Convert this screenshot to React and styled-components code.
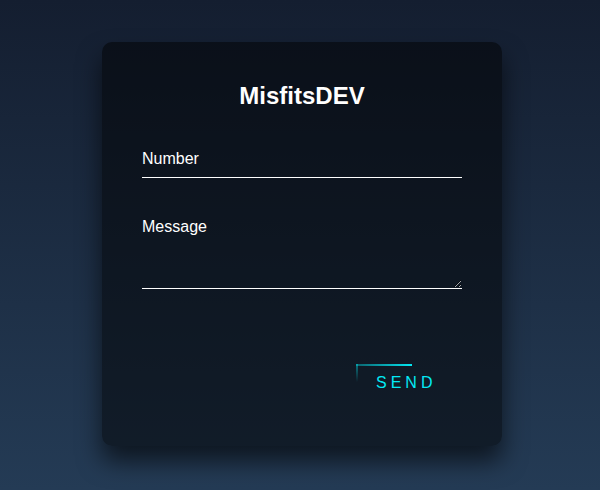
import React from 'react'
import styled, { createGlobalStyle } from 'styled-components'

const GlobalStyle = createGlobalStyle`
  html, body {
    margin: 0;
    padding: 0;
    height: 100%;
  }
  body {
    font-family: "Liberation Sans", Arial, sans-serif;
    background: linear-gradient(#141e30, #243b55);
  }
  #root {
    height: 100%;
  }
`

const Page = styled.div`
  height: 490px;
  box-sizing: border-box;
  padding: 0 0 2px 4px;
  display: flex;
  align-items: center;
  justify-content: center;
`

const Box = styled.form`
  width: 400px;
  box-sizing: border-box;
  padding: 40px 40px 44px;
  background: rgba(0, 0, 0, 0.5);
  box-shadow: 0 15px 25px rgba(0, 0, 0, 0.6);
  border-radius: 10px;
`

const Title = styled.h2`
  margin: 0 0 30px;
  padding: 0;
  color: #fff;
  text-align: center;
  font-size: 24px;
  font-weight: bold;
`

const Field = styled.div`
  position: relative;
  margin-bottom: ${p => p.$gap || 30}px;
`

const Input = styled.input`
  display: block;
  width: 100%;
  box-sizing: border-box;
  padding: 10px 0 9px;
  font-size: 16px;
  font-family: inherit;
  color: #fff;
  border: none;
  border-bottom: 1px solid #fff;
  outline: none;
  background: transparent;
`

const TextArea = styled.textarea`
  display: block;
  width: 100%;
  height: 81px;
  box-sizing: border-box;
  padding: 10px 0;
  font-size: 16px;
  font-family: inherit;
  color: #fff;
  border: none;
  border-bottom: 1px solid #fff;
  outline: none;
  background: transparent;
  resize: vertical;
`

const Label = styled.label`
  position: absolute;
  top: 0;
  left: 0;
  padding: 10px 0;
  font-size: 16px;
  color: #fff;
  pointer-events: none;
`

const Actions = styled.div`
  display: flex;
  padding-left: 214px;
`

const SendButton = styled.a`
  position: relative;
  display: inline-block;
  padding: 10px 20px;
  color: #03e9f4;
  font-size: 16px;
  letter-spacing: 4px;
  text-transform: uppercase;
  text-decoration: none;
  overflow: hidden;
`

const EdgeTop = styled.span`
  position: absolute;
  top: 0;
  left: 0;
  width: 56px;
  height: 2px;
  background: linear-gradient(90deg, rgba(3, 233, 244, 0.35), #03e9f4);
`

const EdgeLeft = styled.span`
  position: absolute;
  top: 0;
  left: 0;
  width: 2px;
  height: 18px;
  background: linear-gradient(180deg, rgba(3, 233, 244, 0.45), transparent);
`

export default function App() {
  return (
    <>
      <GlobalStyle />
      <Page>
        <Box onSubmit={e => e.preventDefault()}>
          <Title>MisfitsDEV</Title>
          <Field>
            <Input type="text" name="number" />
            <Label>Number</Label>
          </Field>
          <Field $gap={75}>
            <TextArea name="message" />
            <Label>Message</Label>
          </Field>
          <Actions>
            <SendButton href="#">
              <EdgeTop />
              <EdgeLeft />
              Send
            </SendButton>
          </Actions>
        </Box>
      </Page>
    </>
  )
}
